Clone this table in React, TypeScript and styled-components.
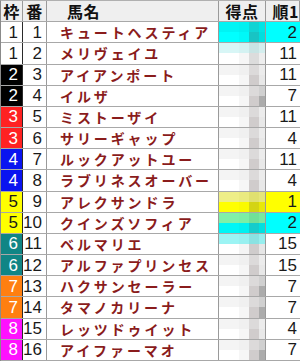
import React from 'react'
import styled, { createGlobalStyle } from 'styled-components'

const GlobalStyle = createGlobalStyle`
  html, body {
    margin: 0;
    padding: 0;
    background: #fff;
  }
`

type Horse = {
  waku: number
  ban: number
  name: string
  rank: number
  hl?: 'cyan' | 'yellow'
}

const horses: Horse[] = [
  { waku: 1, ban: 1, name: 'キュートヘスティア', rank: 2, hl: 'cyan' },
  { waku: 1, ban: 2, name: 'メリヴェイユ', rank: 11 },
  { waku: 2, ban: 3, name: 'アイアンポート', rank: 11 },
  { waku: 2, ban: 4, name: 'イルザ', rank: 7 },
  { waku: 3, ban: 5, name: 'ミストーザイ', rank: 11 },
  { waku: 3, ban: 6, name: 'サリーギャップ', rank: 4 },
  { waku: 4, ban: 7, name: 'ルックアットユー', rank: 11 },
  { waku: 4, ban: 8, name: 'ラブリネスオーバー', rank: 4 },
  { waku: 5, ban: 9, name: 'アレクサンドラ', rank: 1, hl: 'yellow' },
  { waku: 5, ban: 10, name: 'クインズソフィア', rank: 2, hl: 'cyan' },
  { waku: 6, ban: 11, name: 'ベルマリエ', rank: 15 },
  { waku: 6, ban: 12, name: 'アルファプリンセス', rank: 15 },
  { waku: 7, ban: 13, name: 'ハクサンセーラー', rank: 7 },
  { waku: 7, ban: 14, name: 'タマノカリーナ', rank: 7 },
  { waku: 8, ban: 15, name: 'レッツドゥイット', rank: 4 },
  { waku: 8, ban: 16, name: 'アイファーマオ', rank: 7 },
]

const wakuColors: Record<number, { bg: string; fg: string }> = {
  1: { bg: '#ffffff', fg: '#1a1a1a' },
  2: { bg: '#000000', fg: '#ffffff' },
  3: { bg: '#ff2222', fg: '#ffffff' },
  4: { bg: '#0a14f0', fg: '#ffffff' },
  5: { bg: '#ffff00', fg: '#1a1a1a' },
  6: { bg: '#108585', fg: '#ffffff' },
  7: { bg: '#ff7f10', fg: '#ffffff' },
  8: { bg: '#ff10ff', fg: '#ffffff' },
}

const hlColors = { cyan: '#00ffff', yellow: '#ffff00' }

// mosaic of the blurred score: 2 bands x 4 blocks
const mosaicFor = (h: Horse): string[][] => {
  if (h.hl === 'cyan' && h.ban === 1) {
    return [
      ['#00f4f4', '#00f0f0', '#10d4d4', '#00e4e4'],
      ['#00ffff', '#00f8f8', '#18c4c4', '#00dede'],
    ]
  }
  if (h.hl === 'cyan') {
    return [
      ['#80f0a8', '#7ceea4', '#70e098', '#78e8a0'],
      ['#00f6f6', '#00f0f0', '#14cccc', '#00e0e0'],
    ]
  }
  if (h.hl === 'yellow') {
    return [
      ['#eeee88', '#eaea80', '#e0e070', '#e6e67a'],
      ['#ffff00', '#fafa00', '#d4d414', '#e8e808'],
    ]
  }
  if (h.ban === 2) {
    return [
      ['#d8f6f6', '#d4f2f2', '#c8e4e4', '#d4eeee'],
      ['#ffffff', '#f6f6f6', '#dcdcdc', '#eeeeee'],
    ]
  }
  if (h.ban === 11) {
    return [
      ['#9cf4f4', '#98f0f0', '#8ae2e2', '#96eeee'],
      ['#ffffff', '#f4f4f4', '#cfcccc', '#e6e6e6'],
    ]
  }
  const dark = h.rank === 7
  return [
    ['#f4f4f4', '#f0f0f0', '#dcdada', dark ? '#d0d0d0' : '#ececec'],
    ['#ffffff', '#f6f6f6', '#d0cccc', dark ? '#acacac' : '#e8e8e8'],
  ]
}

const Table = styled.div`
  width: 300px;
  height: 361px;
  display: flex;
  flex-direction: column;
  box-sizing: border-box;
  border-left: 1px solid #8a8a8a;
  border-top: 1px solid #b0b0b0;
  overflow: hidden;
`

const Row = styled.div<{ $header?: boolean }>`
  flex: 1;
  display: grid;
  grid-template-columns: 22px 24px 172px 47px 1fr;
  border-bottom: 1px solid #a8a8a8;
  background: ${(p) => (p.$header ? '#efefef' : '#ffffff')};
  min-height: 0;
  line-height: 1;
`

const HeadCell = styled.div<{ $align?: string; $pad?: string }>`
  display: flex;
  align-items: center;
  justify-content: ${(p) => p.$align || 'center'};
  padding: ${(p) => p.$pad || '0'};
  font-family: 'Noto Sans CJK JP', sans-serif;
  font-weight: 700;
  font-size: 16px;
  line-height: 1;
  color: #111;
  border-right: 1px solid #9a9a9a;
  letter-spacing: 0.5px;
  white-space: nowrap;
`

const WakuCell = styled.div<{ $bg: string; $fg: string }>`
  display: flex;
  align-items: center;
  justify-content: flex-end;
  padding-right: 4px;
  background: ${(p) => p.$bg};
  color: ${(p) => p.$fg};
  border-right: 1px solid #2a2a2a;
  font-family: 'Liberation Sans Narrow', 'Liberation Sans', sans-serif;
  font-size: 17px;
`

const NumCell = styled.div`
  display: flex;
  align-items: center;
  justify-content: flex-end;
  padding-right: 4px;
  color: #1a1a1a;
  border-right: 1px solid #9a9a9a;
  font-family: 'Liberation Sans Narrow', 'Liberation Sans', sans-serif;
  font-size: 17px;
`

const NameCell = styled.div`
  display: flex;
  align-items: center;
  padding-left: 13px;
  color: #8a1c1c;
  border-right: 1px solid #9a9a9a;
  font-family: 'Noto Sans CJK JP', sans-serif;
  font-weight: 700;
  font-size: 14px;
  letter-spacing: 2.9px;
  white-space: nowrap;
  overflow: hidden;
`

const ScoreCell = styled.div`
  display: grid;
  grid-template-rows: 1fr 1fr;
  border-right: 1px solid #9a9a9a;
`

const ScoreBand = styled.div`
  display: grid;
  grid-template-columns: 20px 10px 10px 1fr;
`

const Block = styled.div<{ $c: string }>`
  background: ${(p) => p.$c};
`

const RankCell = styled.div<{ $bg: string }>`
  display: flex;
  align-items: center;
  justify-content: flex-end;
  padding-right: 3px;
  background: ${(p) => p.$bg};
  color: #1a1a1a;
  font-family: 'Liberation Sans Narrow', 'Liberation Sans', sans-serif;
  font-size: 17px;
`

export default function App() {
  return (
    <>
      <GlobalStyle />
      <Table>
        <Row $header>
          <HeadCell>枠</HeadCell>
          <HeadCell>番</HeadCell>
          <HeadCell $align="flex-start" $pad="0 0 0 20px">
            馬名
          </HeadCell>
          <HeadCell>得点</HeadCell>
          <HeadCell $align="flex-end" $pad="0 0 0 0">
            順1
          </HeadCell>
        </Row>
        {horses.map((h) => {
          const w = wakuColors[h.waku]
          const mosaic = mosaicFor(h)
          return (
            <Row key={h.ban}>
              <WakuCell $bg={w.bg} $fg={w.fg}>
                {h.waku}
              </WakuCell>
              <NumCell>{h.ban}</NumCell>
              <NameCell>{h.name}</NameCell>
              <ScoreCell>
                {mosaic.map((band, i) => (
                  <ScoreBand key={i}>
                    {band.map((c, j) => (
                      <Block key={j} $c={c} />
                    ))}
                  </ScoreBand>
                ))}
              </ScoreCell>
              <RankCell $bg={h.hl ? hlColors[h.hl] : '#ffffff'}>{h.rank}</RankCell>
            </Row>
          )
        })}
      </Table>
    </>
  )
}
